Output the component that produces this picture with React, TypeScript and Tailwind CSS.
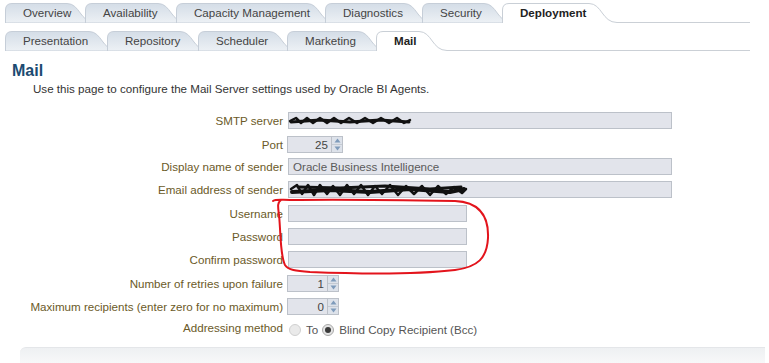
import React from "react";

type TabDef = { label: string; w: number; wc: string; selected?: boolean; last?: boolean };

const row1: TabDef[] = [
  { label: "Overview", w: 90, wc: "w-[90px]" },
  { label: "Availability", w: 101, wc: "w-[101px]" },
  { label: "Capacity Management", w: 159, wc: "w-[159px]" },
  { label: "Diagnostics", w: 107, wc: "w-[107px]" },
  { label: "Security", w: 90, wc: "w-[90px]" },
  { label: "Deployment", w: 115, wc: "w-[115px]", selected: true, last: true },
];

const row2: TabDef[] = [
  { label: "Presentation", w: 112, wc: "w-[112px]" },
  { label: "Repository", w: 101, wc: "w-[101px]" },
  { label: "Scheduler", w: 99, wc: "w-[99px]" },
  { label: "Marketing", w: 99, wc: "w-[99px]" },
  { label: "Mail", w: 71, wc: "w-[71px]", selected: true, last: true },
];

function Tab({ t, id }: { t: TabDef; id: string }) {
  const w = t.w;
  const open = `M0.5,20 L0.5,7 Q0.5,0.5 7,0.5 L${w - 28},0.5 C${w - 15},0.5 ${w - 15},19.5 ${w},19.5`;
  const closed = `M0.5,20 L0.5,7 Q0.5,0.5 7,0.5 L${w - 28},0.5 C${w - 15},0.5 ${w - 15},19.5 ${w},19.5 L${w},20 Z`;
  return (
    <div className={`relative h-[20px] shrink-0 ${t.wc} ${t.last ? "" : "-mr-[10px]"}`}>
      <svg className="absolute inset-0" width={w} height={20} viewBox={`0 0 ${w} 20`}>
        <defs>
          <linearGradient id={id} x1="0" y1="0" x2="0" y2="1">
            <stop offset="0" stopColor="#d4dde7" />
            <stop offset="1" stopColor="#edf1f5" />
          </linearGradient>
        </defs>
        {t.selected ? (
          <>
            <path d={closed} fill="#ffffff" stroke="none" />
            <path d={open} fill="none" stroke="#c9cfd6" strokeWidth="1" />
          </>
        ) : (
          <path d={closed} fill={`url(#${id})`} stroke="#c6ced8" strokeWidth="1" />
        )}
      </svg>
      <span
        className={`relative block pl-[18px] leading-[20px] text-[11.6px] whitespace-nowrap ${
          t.selected ? "font-bold text-[#222222]" : "text-[#444444]"
        }`}
      >
        {t.label}
      </span>
    </div>
  );
}

function TabRow({ tabs, lineW, prefix }: { tabs: TabDef[]; lineW: string; prefix: string }) {
  return (
    <div className="flex items-end pl-[5px]">
      {tabs.map((t, i) => (
        <Tab key={t.label} t={t} id={`${prefix}${i}`} />
      ))}
      <div className={`h-[20px] border-b border-[#cbd0d6] ${lineW}`} />
    </div>
  );
}

function Label({ children }: { children: React.ReactNode }) {
  return <div className="w-[283px] shrink-0 text-right text-[#6b5a28] whitespace-nowrap">{children}</div>;
}

function TextBox({ wc, value }: { wc: string; value?: string }) {
  return (
    <div
      className={`ml-[5px] h-[17px] ${wc} border border-[#bcc1c9] bg-[#e2e4eb] px-[4px] leading-[15px] text-[#5a5a5a] whitespace-nowrap overflow-hidden`}
    >
      {value}
    </div>
  );
}

function Spinner({ value, wc }: { value: string; wc: string }) {
  return (
    <div className="ml-[4px] flex h-[17px]">
      <div
        className={`${wc} h-[17px] border border-[#bcc1c9] bg-[#e2e4eb] pr-[3px] text-right leading-[15px] text-[#444444]`}
      >
        {value}
      </div>
      <div className="flex h-[17px] w-[11px] flex-col border border-l-0 border-[#bcc1c9] bg-[#dde2ea]">
        <div className="flex h-[8px] items-center justify-center border-b border-[#c4cad3]">
          <svg width="7" height="5" viewBox="0 0 7 5">
            <path d="M0.5,4.5 L3.5,0.5 L6.5,4.5 Z" fill="#7f9bbb" />
          </svg>
        </div>
        <div className="flex flex-1 items-center justify-center">
          <svg width="7" height="5" viewBox="0 0 7 5">
            <path d="M0.5,0.5 L3.5,4.5 L6.5,0.5 Z" fill="#7f9bbb" />
          </svg>
        </div>
      </div>
    </div>
  );
}

function Row({ children, extra = "" }: { children: React.ReactNode; extra?: string }) {
  return <div className={`flex h-[23px] items-center ${extra}`}>{children}</div>;
}

export default function App() {
  return (
    <div className="relative h-[363px] w-[769px] overflow-hidden bg-white font-['Liberation_Sans',Arial,sans-serif] text-[11.6px]">
      <div className="pt-[3px]">
        <TabRow tabs={row1} lineW="w-[133px]" prefix="a" />
      </div>
      <div className="mt-[8px]">
        <TabRow tabs={row2} lineW="w-[303px]" prefix="b" />
      </div>

      <h1 className="mt-[11px] pl-[12px] text-[16px] font-bold leading-[18px] text-[#1b4b72]">Mail</h1>
      <p className="mt-[1px] pl-[33px] leading-[15px] text-[#333333]">
        Use this page to configure the Mail Server settings used by Oracle BI Agents.
      </p>

      <div className="mt-[13px]">
        <Row>
          <Label>SMTP server</Label>
          <TextBox wc="w-[384px]" />
        </Row>
        <Row extra="mt-[1px]">
          <Label>Port</Label>
          <Spinner value="25" wc="w-[45px]" />
        </Row>
        <Row extra="-mt-[1px]">
          <Label>Display name of sender</Label>
          <TextBox wc="w-[384px]" value="Oracle Business Intelligence" />
        </Row>
        <Row>
          <Label>Email address of sender</Label>
          <TextBox wc="w-[384px]" />
        </Row>
        <Row extra="mt-[1px]">
          <Label>Username</Label>
          <TextBox wc="w-[179px]" />
        </Row>
        <Row>
          <Label>Password</Label>
          <TextBox wc="w-[179px]" />
        </Row>
        <Row>
          <Label>Confirm password</Label>
          <TextBox wc="w-[179px]" />
        </Row>
        <Row extra="mt-[1px]">
          <Label>Number of retries upon failure</Label>
          <Spinner value="1" wc="w-[41px]" />
        </Row>
        <Row>
          <Label>Maximum recipients (enter zero for no maximum)</Label>
          <Spinner value="0" wc="w-[41px]" />
        </Row>
        <Row extra="-mt-[2px]">
          <Label>Addressing method</Label>
          <div className="ml-[6px] mt-[5px] flex items-center text-[#555555]">
            <span className="h-[12px] w-[12px] rounded-full border border-[#d0d0d0] bg-[#eaeaea]" />
            <span className="ml-[5px]">To</span>
            <span className="ml-[4px] flex h-[12px] w-[12px] items-center justify-center rounded-full border border-[#a9a9a9] bg-[#e4e4e4]">
              <span className="h-[6px] w-[6px] rounded-full bg-[#3a3a3a]" />
            </span>
            <span className="ml-[5px]">Blind Copy Recipient (Bcc)</span>
          </div>
        </Row>
      </div>

      <div className="ml-[20px] mt-[8px] h-[16px] w-[745px] rounded-tl-[6px] border-t border-[#e4e6e9] bg-gradient-to-b from-[#eef0f2] to-[#f7f8f9]" />

      <svg className="pointer-events-none absolute inset-0" width="769" height="363" viewBox="0 0 769 363">
        <g stroke="#111111" strokeLinecap="round" strokeLinejoin="round" fill="none">
          <path d="M290,121 L296,118 L301,123 L307,118 L313,123 L320,118 L327,123 L334,118 L341,123 L349,118 L357,123 L365,118 L373,123 L381,118 L389,123 L397,118 L404,123 L410,120" strokeWidth="2.5" />
          <path d="M291,122 L320,120 L350,122 L380,120 L409,122" strokeWidth="3" />
          <path d="M291,189 L297,185 L302,194 L308,185 L314,195 L320,185 L327,194 L333,186 L340,195 L347,185 L354,194 L361,185 L368,195 L375,186 L382,194 L390,185 L398,195 L406,186 L414,194 L422,186 L430,195 L438,186 L446,194 L454,187 L462,193 L466,189" strokeWidth="2.5" />
          <path d="M292,192 L330,190 L370,192 L410,189 L450,192 L464,189" strokeWidth="4" />
          <path d="M298,187 L340,188 L385,186 L430,189 L461,187" strokeWidth="3" />
        </g>
        <path
          d="M273,201 C276,199 281,200 290,200 C340,199 400,200 455,201 C478,202 489,215 488,238 C487,258 478,267 455,270 C420,274 360,274 310,272 C296,271 288,270 285,265 C280,255 281,235 279,215 C278,207 277,203 281,200"
          fill="none"
          stroke="#e3141c"
          strokeWidth="2"
          strokeLinecap="round"
        />
      </svg>
    </div>
  );
}
